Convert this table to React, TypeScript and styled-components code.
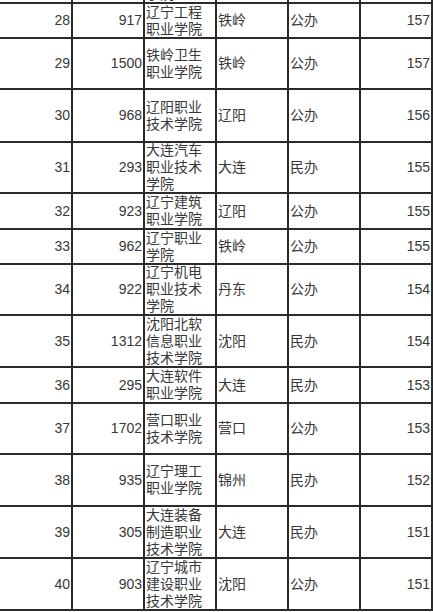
import React from "react";
import styled, { createGlobalStyle } from "styled-components";

const Global = createGlobalStyle`
  html, body {
    margin: 0;
    padding: 0;
    background: #ffffff;
  }
  body {
    font-family: "Liberation Sans", "Noto Sans CJK SC", sans-serif;
  }
`;

const Viewport = styled.div`
  width: 433px;
  height: 612px;
  overflow: hidden;
  background: #ffffff;
`;

const Table = styled.div`
  display: flex;
  flex-direction: column;
  margin-top: -48px;
  margin-left: -17px;
  width: 450px;
`;

const Row = styled.div<{ $h: number }>`
  display: grid;
  grid-template-columns: 90px repeat(5, 72px);
  height: ${(p) => p.$h}px;
`;

const Cell = styled.div<{ $num?: boolean }>`
  box-sizing: border-box;
  display: flex;
  align-items: center;
  justify-content: ${(p) => (p.$num ? "flex-end" : "flex-start")};
  text-align: ${(p) => (p.$num ? "right" : "left")};
  padding: ${(p) => (p.$num ? "0 1px 0 0" : "0 2px 0 1px")};
  border-right: 2px solid #2b2b2b;
  border-bottom: 2px solid #2b2b2b;
  overflow: hidden;
  font-size: 14px;
  line-height: 17px;
  color: #383838;
  font-family: "Liberation Sans", "Noto Sans CJK SC", sans-serif;
`;

type Item = {
  rank: string;
  code: string;
  name: string;
  city: string;
  kind: string;
  score: string;
  h: number;
};

const rows: Item[] = [
  { rank: "", code: "", name: "辽宁经济职业技术学院", city: "", kind: "", score: "", h: 52 },
  { rank: "28", code: "917", name: "辽宁工程职业学院", city: "铁岭", kind: "公办", score: "157", h: 35 },
  { rank: "29", code: "1500", name: "铁岭卫生职业学院", city: "铁岭", kind: "公办", score: "157", h: 51 },
  { rank: "30", code: "968", name: "辽阳职业技术学院", city: "辽阳", kind: "公办", score: "156", h: 53 },
  { rank: "31", code: "293", name: "大连汽车职业技术学院", city: "大连", kind: "民办", score: "155", h: 51 },
  { rank: "32", code: "923", name: "辽宁建筑职业学院", city: "辽阳", kind: "公办", score: "155", h: 36 },
  { rank: "33", code: "962", name: "辽宁职业学院", city: "铁岭", kind: "公办", score: "155", h: 35 },
  { rank: "34", code: "922", name: "辽宁机电职业技术学院", city: "丹东", kind: "公办", score: "154", h: 51 },
  { rank: "35", code: "1312", name: "沈阳北软信息职业技术学院", city: "沈阳", kind: "民办", score: "154", h: 52 },
  { rank: "36", code: "295", name: "大连软件职业学院", city: "大连", kind: "民办", score: "153", h: 36 },
  { rank: "37", code: "1702", name: "营口职业技术学院", city: "营口", kind: "公办", score: "153", h: 51 },
  { rank: "38", code: "935", name: "辽宁理工职业学院", city: "锦州", kind: "民办", score: "152", h: 52 },
  { rank: "39", code: "305", name: "大连装备制造职业技术学院", city: "大连", kind: "民办", score: "151", h: 52 },
  { rank: "40", code: "903", name: "辽宁城市建设职业技术学院", city: "沈阳", kind: "公办", score: "151", h: 52 },
];

export default function App() {
  return (
    <>
      <Global />
      <Viewport>
        <Table>
          {rows.map((r, i) => (
            <Row key={i} $h={r.h}>
              <Cell $num>{r.rank}</Cell>
              <Cell $num>{r.code}</Cell>
              <Cell>{r.name}</Cell>
              <Cell>{r.city}</Cell>
              <Cell>{r.kind}</Cell>
              <Cell $num>{r.score}</Cell>
            </Row>
          ))}
        </Table>
      </Viewport>
    </>
  );
}
